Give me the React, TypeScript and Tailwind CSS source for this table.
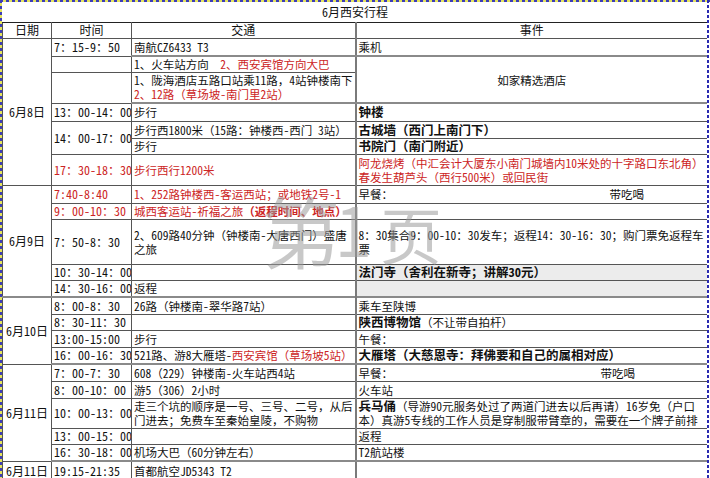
import React from "react";

const F = "font-['Noto_Sans_Mono_CJK_SC','Noto_Sans_CJK_SC',sans-serif]";

function C({
  children,
  className = "",
  rowSpan,
  colSpan,
}: {
  children?: React.ReactNode;
  className?: string;
  rowSpan?: number;
  colSpan?: number;
}) {
  return (
    <td
      rowSpan={rowSpan}
      colSpan={colSpan}
      className={"border border-[#555] px-[2px] py-0 overflow-hidden whitespace-nowrap align-middle " + className}
    >
      {children}
    </td>
  );
}

const red = "text-[#cc2424]";
const ev = "border-l-2 border-l-[#7a7a7a]";
const bold = "text-[12.5px] font-bold";
const tm = "text-[12px]";

export default function App() {
  return (
    <div className={"relative w-[710px] h-[478px] overflow-hidden bg-white text-[#111] " + F}>
      <div className="pl-[2px]">
        <table className="table-fixed border-collapse w-[705px] text-[11.5px] leading-[14px]">
          <colgroup>
            <col className="w-[49px]" />
            <col className="w-[80px]" />
            <col className="w-[224px]" />
            <col className="w-[352px]" />
          </colgroup>
          <tbody>
            <tr className="h-[22px]">
              <td colSpan={4} className="text-center align-middle pt-[2px] text-[12px]">6月西安行程</td>
            </tr>
            <tr className="h-[16px] text-[12px]">
              <C className="text-center border-t-[#222]">日期</C>
              <C className="text-center border-t-[#222]">时间</C>
              <C className="text-center border-t-[#222]">交通</C>
              <C className={"text-center border-t-[#222] " + ev}>事件</C>
            </tr>
            {/* 6月8日 */}
            <tr className="h-[18px]">
              <C rowSpan={7} className="text-center text-[12px]">6月8日</C>
              <C className={tm}>7：15-9：50</C>
              <C className="border-b-2 border-b-[#8a8a8a]">南航CZ6433 T3</C>
              <C className={"border-b-2 border-b-[#8a8a8a] " + ev}>乘机</C>
            </tr>
            <tr className="h-[16px]">
              <C></C>
              <C>
                1、火车站方向　<span className={red}>2、西安宾馆方向大巴</span>
              </C>
              <C rowSpan={2} className={"text-center border-b-2 border-b-[#8a8a8a] " + ev}>如家精选酒店</C>
            </tr>
            <tr className="h-[31px]">
              <C></C>
              <C className="border-b-2 border-b-[#8a8a8a]">
                1、陇海酒店五路口站乘11路，4站钟楼南下
                <br />
                <span className={red}>2、12路（草场坡-南门里2站）</span>
              </C>
            </tr>
            <tr className="h-[18px]">
              <C className={tm}>13：00-14：00</C>
              <C>步行</C>
              <C className={bold + " " + ev}>钟楼</C>
            </tr>
            <tr className="h-[17px]">
              <C rowSpan={2} className={tm}>14：00-17：00</C>
              <C>步行西1800米（15路：钟楼西-西门 3站）</C>
              <C className={bold + " " + ev}>古城墙（西门上南门下）</C>
            </tr>
            <tr className="h-[16px]">
              <C>步行</C>
              <C className={bold + " " + ev}>书院门（南门附近）</C>
            </tr>
            <tr className="h-[31px]">
              <C className={red + " " + tm}>17：30-18：30</C>
              <C className={red}>步行西行1200米</C>
              <C className={red + " " + ev}>
                阿龙烧烤（中汇会计大厦东小南门城墙内10米处的十字路口东北角）
                <br />
                春发生葫芦头（西行500米）或回民街
              </C>
            </tr>
            {/* 6月9日 */}
            <tr className="h-[18px]">
              <C rowSpan={5} className="text-center text-[12px]">6月9日</C>
              <C className={red + " " + tm}>7:40-8:40</C>
              <C className={red}>1、252路钟楼西-客运西站；或地铁2号-1</C>
              <C className={ev}>
                <div className="flex">
                  <span className="w-[251px]">早餐：</span>
                  <span>带吃喝</span>
                </div>
              </C>
            </tr>
            <tr className="h-[16px]">
              <C className={red + " " + tm}>9：00-10：30</C>
              <C className={red}>
                城西客运站-祈福之旅<span className="font-bold">（返程时间、地点）</span>
              </C>
              <C className={ev}></C>
            </tr>
            <tr className="h-[45px]">
              <C className={tm}>7：50-8：30</C>
              <C>
                2、609路40分钟（钟楼南-大唐西门）盛唐
                <br />
                之旅
              </C>
              <C className={ev}>
                8：30集合9：00-10：30发车；返程14：30-16：30；购门票免返程车
                <br />
                票
              </C>
            </tr>
            <tr className="h-[16px]">
              <C className={tm}>10：30-14：00</C>
              <C></C>
              <C className={bold + " bg-[#ececec] " + ev}>法门寺（舍利在新寺；讲解30元）</C>
            </tr>
            <tr className="h-[17px]">
              <C className={tm}>14：30-16：00</C>
              <C>返程</C>
              <C className={"bg-[#ececec] " + ev}></C>
            </tr>
            {/* 6月10日 */}
            <tr className="h-[17px]">
              <C rowSpan={4} className="text-center text-[12px] border-t-2 border-t-[#8a8a8a]">6月10日</C>
              <C className={tm + " border-t-2 border-t-[#8a8a8a]"}>8：00-8：30</C>
              <C className="border-t-2 border-t-[#8a8a8a]">26路（钟楼南-翠华路7站）</C>
              <C className={"border-t-2 border-t-[#8a8a8a] " + ev}>乘车至陕博</C>
            </tr>
            <tr className="h-[16px]">
              <C className={tm}>8：30-11：30</C>
              <C></C>
              <C className={ev}>
                <span className={bold}>陕西博物馆</span>（不让带自拍杆）
              </C>
            </tr>
            <tr className="h-[17px]">
              <C className={tm}>13:00-15:00</C>
              <C>步行</C>
              <C className={ev}>午餐：</C>
            </tr>
            <tr className="h-[17px]">
              <C className={tm + " border-b-2 border-b-[#8a8a8a]"}>16：00-16：30</C>
              <C className="border-b-2 border-b-[#8a8a8a]">
                521路、游8大雁塔-<span className={red}>西安宾馆（草场坡5站）</span>
              </C>
              <C className={bold + " border-b-2 border-b-[#8a8a8a] " + ev}>大雁塔（大慈恩寺：拜佛要和自己的属相对应）</C>
            </tr>
            {/* 6月11日 */}
            <tr className="h-[17px]">
              <C rowSpan={5} className="text-center text-[12px]">6月11日</C>
              <C className={tm}>7：00-7：30</C>
              <C>608（229）钟楼南-火车站西4站</C>
              <C className={ev}>
                <div className="flex">
                  <span className="w-[242px]">早餐：</span>
                  <span>带吃喝</span>
                </div>
              </C>
            </tr>
            <tr className="h-[17px]">
              <C className={tm}>8：00-10：00</C>
              <C>游5（306）2小时</C>
              <C className={ev}>火车站</C>
            </tr>
            <tr className="h-[30px]">
              <C className={tm}>10：00-13：00</C>
              <C>
                走三个坑的顺序是一号、三号、二号，从后
                <br />
                门进去；免费车至秦始皇陵，不购物
              </C>
              <C className={ev}>
                <span className={bold}>兵马俑</span>（导游90元服务处过了两道门进去以后再请）16岁免（户口
                <br />
                本）真游5专线的工作人员是穿制服带臂章的，需要在一个牌子前排
              </C>
            </tr>
            <tr className="h-[16px]">
              <C className={tm}>13：00-15：00</C>
              <C></C>
              <C className={ev}>返程</C>
            </tr>
            <tr className="h-[17px]">
              <C className={tm + " border-b-2 border-b-[#8a8a8a]"}>16：30-18：00</C>
              <C className="border-b-2 border-b-[#8a8a8a]">机场大巴（60分钟左右）</C>
              <C className={"border-b-2 border-b-[#8a8a8a] " + ev}>T2航站楼</C>
            </tr>
            <tr className="h-[20px]">
              <C className="text-center text-[12px]">6月11日</C>
              <C className={tm}>19:15-21:35</C>
              <C>首都航空JD5343 T2</C>
              <C className={ev}></C>
            </tr>
          </tbody>
        </table>
      </div>

      {/* watermark */}
      <div className="absolute left-[262px] top-[190px] text-[78px] leading-none font-extralight text-[#9a9a9a]/55 pointer-events-none select-none">
        第
      </div>
      <div className="absolute left-[336px] top-[192px] text-[70px] leading-none font-extralight text-[#9a9a9a]/55 pointer-events-none select-none">
        1
      </div>
      <div className="absolute left-[380px] top-[202px] text-[62px] leading-none font-extralight text-[#9a9a9a]/55 pointer-events-none select-none">
        页
      </div>

      {/* print-preview dashed page edge */}
      <div className="absolute left-0 top-0 w-full h-[2px] bg-[repeating-linear-gradient(90deg,#3d3db8_0px,#3d3db8_3px,#e4e45c_3px,#e4e45c_6px)]" />
      <div className="absolute left-0 top-0 w-[2px] h-full bg-[repeating-linear-gradient(180deg,#3d3db8_0px,#3d3db8_3px,#e4e45c_3px,#e4e45c_6px)]" />
      <div className="absolute left-[707px] top-0 w-[2px] h-full bg-[repeating-linear-gradient(180deg,#2a2ab0_0px,#2a2ab0_3px,#ffffff_3px,#ffffff_5px)]" />
    </div>
  );
}
